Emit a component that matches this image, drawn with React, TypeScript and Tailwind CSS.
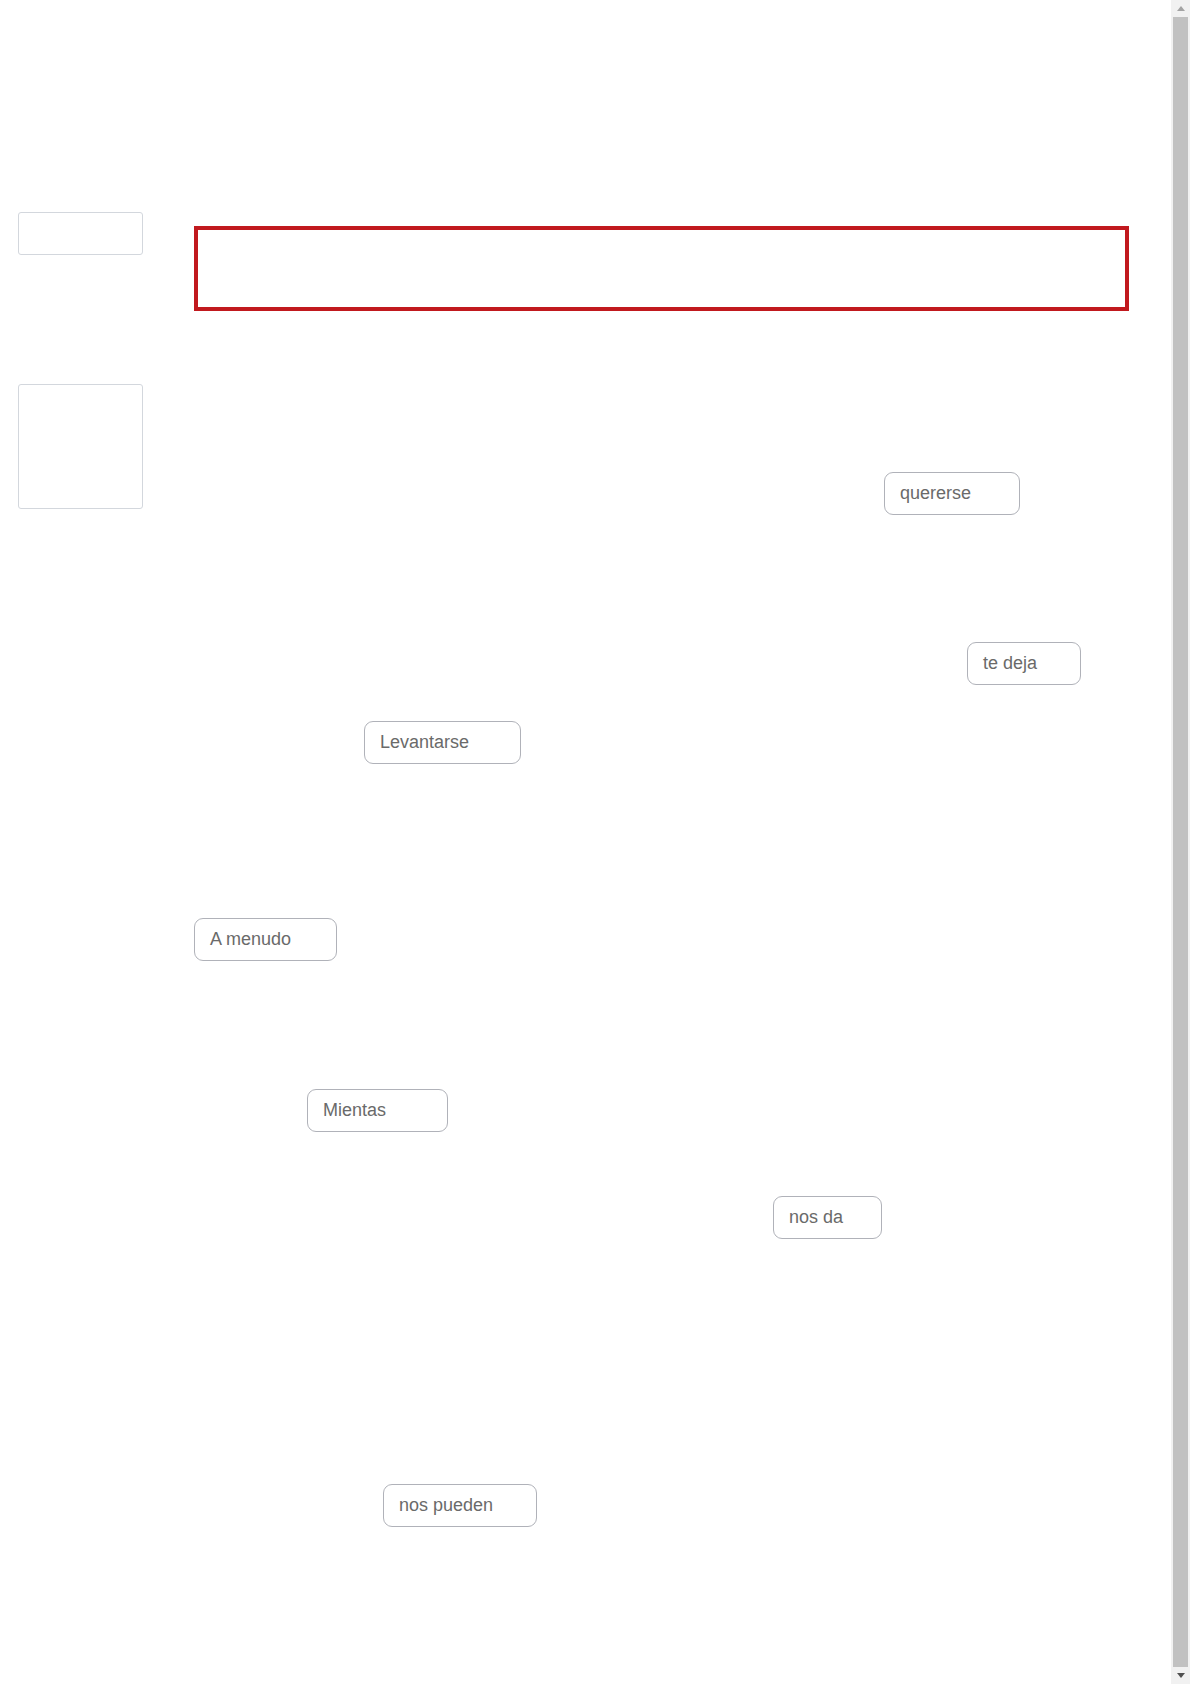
const chips = [
  { label: 'quererse', left: 'left-[690px]', top: 'top-[161px]', width: 'w-[136px]' },
  { label: 'te deja', left: 'left-[773px]', top: 'top-[331px]', width: 'w-[114px]' },
  { label: 'Levantarse', left: 'left-[170px]', top: 'top-[410px]', width: 'w-[157px]' },
  { label: 'A menudo', left: 'left-0', top: 'top-[607px]', width: 'w-[143px]' },
  { label: 'Mientas', left: 'left-[113px]', top: 'top-[778px]', width: 'w-[141px]' },
  { label: 'nos da', left: 'left-[579px]', top: 'top-[885px]', width: 'w-[109px]' },
  { label: 'nos pueden', left: 'left-[189px]', top: 'top-[1173px]', width: 'w-[154px]' },
]

function Chip({ label, left, top, width }: { label: string; left: string; top: string; width: string }) {
  return (
    <div
      className={`absolute ${left} ${top} ${width} flex h-[43px] items-center rounded-[9px] border border-[#b0b2b9] bg-white pl-[15px] text-[18px] text-[#6a6a6a]`}
    >
      {label}
    </div>
  )
}

// fake window scrollbar, the page is a bit taller than the viewport
function Scrollbar() {
  return (
    <div className="fixed right-0 top-0 flex h-screen w-[19px] flex-col bg-[#f1f1f1]">
      <div className="flex h-[17px] items-center justify-center">
        <svg width="8" height="5" viewBox="0 0 8 5">
          <path d="M0 5 L4 0 L8 5 Z" fill="#a3a3a3" />
        </svg>
      </div>
      <div className="mx-[2px] flex-1 bg-[#c1c1c1]" />
      <div className="flex h-[17px] items-center justify-center">
        <svg width="8" height="5" viewBox="0 0 8 5">
          <path d="M0 0 L4 5 L8 0 Z" fill="#505050" />
        </svg>
      </div>
    </div>
  )
}

export default function App() {
  return (
    <div className="min-h-[1720px] bg-white font-['Liberation_Sans',Arial,sans-serif]">
      <div className="flex pl-[18px] pt-[212px]">
        {/* Left slots */}
        <div className="flex w-[125px] flex-col gap-[129px]">
          <div className="h-[43px] rounded-[3px] border border-[#d3d7dd]" />
          <div className="h-[125px] rounded-[3px] border border-[#d3d7dd]" />
        </div>

        {/* Sentence area + word bank */}
        <main className="ml-[51px] w-[935px]">
          <div className="mt-[14px] h-[85px] border-4 border-[#c1191e]" />
          <div className="relative h-[1409px]">
            {chips.map((c) => (
              <Chip key={c.label} {...c} />
            ))}
          </div>
        </main>
      </div>
      <Scrollbar />
    </div>
  )
}
